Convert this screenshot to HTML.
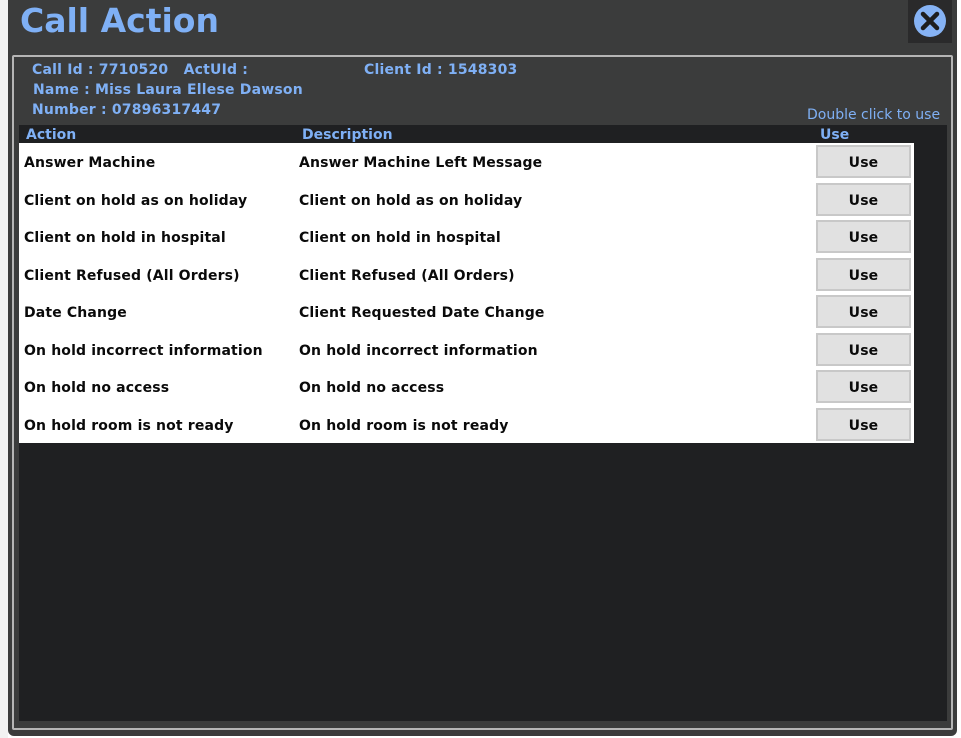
<!DOCTYPE html>
<html><head><style>
*{margin:0;padding:0;box-sizing:border-box}
body{width:961px;height:738px;background:#fff;position:relative;overflow:hidden;font-family:"DejaVu Sans",Verdana,sans-serif}
.a{position:absolute}
#dlg{left:8px;top:0;width:949px;height:736px;background:#3b3c3c;border-radius:0 0 6px 6px}
#title{left:20px;top:1px;font-size:33px;font-weight:bold;color:#7fb0f5}
#close{left:908px;top:0;width:44px;height:43px;background:#2a2a2b}
#inner{left:12px;top:55px;width:941px;height:675px;border:2px solid #b5b5b5;border-radius:2px}
.info{font-size:14px;font-weight:bold;color:#7fb0f5;letter-spacing:0.2px}
#dark{left:19px;top:125px;width:928px;height:596px;background:#1f2022}
.hd{font-size:14px;font-weight:bold;color:#7fb0f5;top:127px}
#tbl{left:19px;top:143px;width:895px;height:300px;background:#fff}
.row{position:absolute;left:0;width:895px;height:37.5px;font-size:14px;font-weight:bold;color:#0a0a0a;letter-spacing:0.15px}
.row span{position:absolute;top:12px}
.btn{position:absolute;left:797px;top:2px;width:95px;height:33px;background:#e1e1e1;border:2px solid #c8c8c8;text-align:center;line-height:32px}
</style></head><body>
<div class="a" style="left:0;top:0;width:8px;height:738px;background:#f2f2f2"></div>
<div class="a" id="dlg"></div>
<div class="a" id="title">Call Action</div>
<div class="a" id="close"><svg width="44" height="43"><circle cx="22" cy="21" r="16" fill="#86b3f5"/><path d="M15 14 L29 28 M29 14 L15 28" stroke="#1e1e1e" stroke-width="4.5" stroke-linecap="round"/></svg></div>
<div class="a" id="inner"></div>
<div class="a info" style="left:32px;top:62px">Call Id : 7710520&nbsp;&nbsp; ActUId :</div>
<div class="a info" style="left:364px;top:62px">Client Id : 1548303</div>
<div class="a info" style="left:33px;top:82px">Name : Miss Laura Ellese Dawson</div>
<div class="a info" style="left:32px;top:102px">Number : 07896317447</div>
<div class="a" style="left:807px;top:107px;font-size:14px;color:#7fb0f5">Double click to use</div>
<div class="a" id="dark"></div>
<div class="a hd" style="left:26px">Action</div>
<div class="a hd" style="left:302px">Description</div>
<div class="a hd" style="left:820px">Use</div>
<div class="a" id="tbl">
<div class="row" style="top:0"><span style="left:5px">Answer Machine</span><span style="left:280px">Answer Machine Left Message</span><div class="btn">Use</div></div>
<div class="row" style="top:37.5px"><span style="left:5px">Client on hold as on holiday</span><span style="left:280px">Client on hold as on holiday</span><div class="btn">Use</div></div>
<div class="row" style="top:75px"><span style="left:5px">Client on hold in hospital</span><span style="left:280px">Client on hold in hospital</span><div class="btn">Use</div></div>
<div class="row" style="top:112.5px"><span style="left:5px">Client Refused (All Orders)</span><span style="left:280px">Client Refused (All Orders)</span><div class="btn">Use</div></div>
<div class="row" style="top:150px"><span style="left:5px">Date Change</span><span style="left:280px">Client Requested Date Change</span><div class="btn">Use</div></div>
<div class="row" style="top:187.5px"><span style="left:5px">On hold incorrect information</span><span style="left:280px">On hold incorrect information</span><div class="btn">Use</div></div>
<div class="row" style="top:225px"><span style="left:5px">On hold no access</span><span style="left:280px">On hold no access</span><div class="btn">Use</div></div>
<div class="row" style="top:262.5px"><span style="left:5px">On hold room is not ready</span><span style="left:280px">On hold room is not ready</span><div class="btn">Use</div></div>
</div>
</body></html>
